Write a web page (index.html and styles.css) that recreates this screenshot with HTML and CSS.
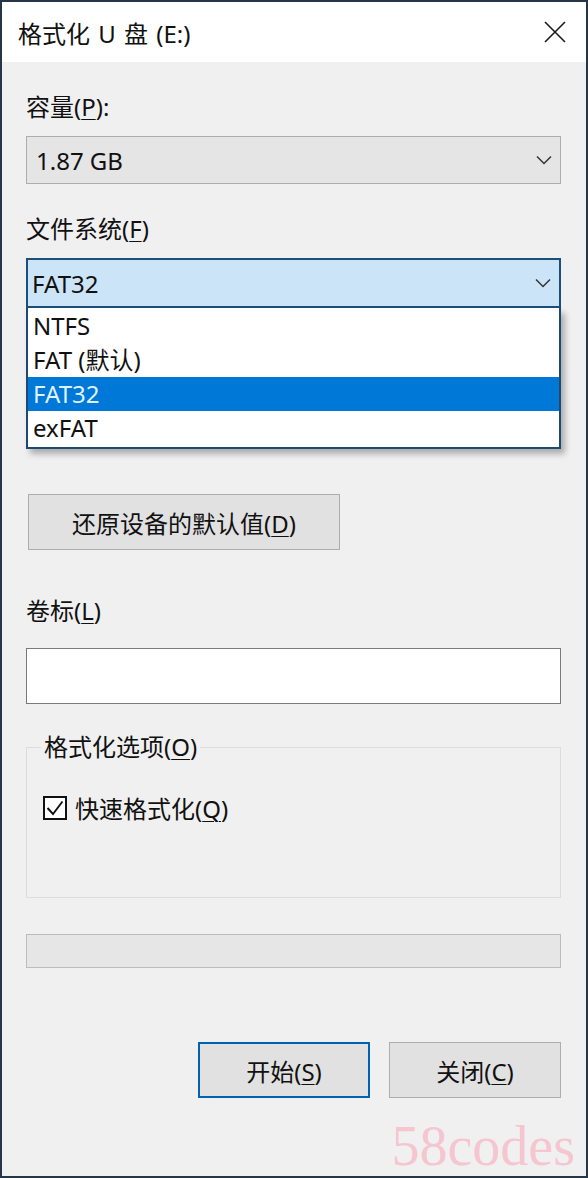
FILE: index.html
```html
<!DOCTYPE html>
<html lang="zh-CN">
<head>
<meta charset="utf-8">
<title>格式化 U 盘 (E:)</title>
<link rel="stylesheet" href="styles.css">
</head>
<body>
<div class="window">
  <div class="titlebar">
    <span class="title">格式化 U 盘 (E:)</span>
    <svg class="close" width="24" height="24" viewBox="0 0 24 24"><path d="M2 2 L22 22 M22 2 L2 22" stroke="#1a1a1a" stroke-width="1.6" fill="none"/></svg>
  </div>
  <div class="content">
    <div class="label l-cap">容量(<u>P</u>):</div>
    <div class="combo">
      <span class="combo-text">1.87 GB</span>
      <svg class="chev" width="16" height="10" viewBox="0 0 16 10"><path d="M1 1.5 L8 8.5 L15 1.5" stroke="#333" stroke-width="1.5" fill="none"/></svg>
    </div>
    <div class="label l-fs">文件系统(<u>F</u>)</div>
    <div class="combo-wrap">
      <div class="combo open">
        <span class="combo-text">FAT32</span>
        <svg class="chev" width="16" height="10" viewBox="0 0 16 10"><path d="M1 1.5 L8 8.5 L15 1.5" stroke="#333" stroke-width="1.5" fill="none"/></svg>
      </div>
      <ul class="dropdown">
        <li>NTFS</li>
        <li>FAT (默认)</li>
        <li class="sel">FAT32</li>
        <li>exFAT</li>
      </ul>
    </div>
    <button class="btn restore">还原设备的默认值(<u>D</u>)</button>
    <div class="label l-vol">卷标(<u>L</u>)</div>
    <div class="textbox"></div>
    <fieldset class="group">
      <legend>格式化选项(<u>O</u>)</legend>
      <label class="check">
        <span class="box"><svg width="20" height="20" viewBox="0 0 20 20"><path d="M2.5 10 L8 16 L17.5 3.5" stroke="#111" stroke-width="1.9" fill="none"/></svg></span>
        <span>快速格式化(<u>Q</u>)</span>
      </label>
    </fieldset>
    <div class="progress"></div>
    <div class="actions">
      <button class="btn action primary">开始(<u>S</u>)</button>
      <button class="btn action">关闭(<u>C</u>)</button>
    </div>
    <div class="watermark">58codes</div>
  </div>
</div>
</body>
</html>
```
FILE: styles.css
```css
* { box-sizing: border-box; }
html, body { margin: 0; padding: 0; }
body {
  width: 588px;
  height: 1178px;
  background: #f0f0f0;
  font-family: "Noto Sans", "Noto Sans CJK SC", sans-serif;
  font-size: 24px;
  color: #111;
  overflow: hidden;
}
u { text-decoration-thickness: 1px; text-underline-offset: 3px; }
.window {
  width: 588px;
  height: 1178px;
  border: 2px solid #263646;
  background: #f0f0f0;
  display: flex;
  flex-direction: column;
}
.titlebar {
  height: 60px;
  background: #ffffff;
  display: flex;
  align-items: center;
  justify-content: space-between;
  padding: 0 19px 0 16px;
  flex: none;
}
.title { font-size: 24px; color: #111; word-spacing: 2px; }
.close { display: block; }
.content {
  padding: 0 25px 0 24px;
  display: flex;
  flex-direction: column;
  flex: 1;
}
.label { height: 30px; line-height: 30px; }
.l-cap { margin-top: 30px; }
.l-fs { margin-top: 30px; }
.l-vol { margin-top: 46px; }
.combo {
  height: 48px;
  margin-top: 14px;
  background: #e5e5e5;
  border: 1px solid #adadad;
  display: flex;
  align-items: center;
  justify-content: space-between;
  padding: 0 8px 0 9px;
}
.combo-text { font-size: 24px; }
.combo-wrap { position: relative; margin-top: 14px; }
.combo.open {
  margin-top: 0;
  height: 50px;
  background: #cce4f7;
  border: 2px solid #1b4f7a;
  padding-left: 4px;
}
.dropdown {
  position: absolute;
  left: 0;
  right: 0;
  top: 50px;
  margin: 0;
  padding: 1px 0 2px;
  list-style: none;
  background: #fff;
  border: 2px solid #1e4a72;
  border-top: none;
  box-shadow: 4px 5px 6px rgba(0,0,0,0.28);
  z-index: 2;
}
.dropdown li {
  height: 34px;
  line-height: 34px;
  padding-left: 5px;
  font-size: 24px;
}
.dropdown li.sel { background: #0078d7; color: #dff2ff; }
.btn {
  font-family: inherit;
  font-size: 24px;
  color: #111;
  background: #e1e1e1;
  border: 1px solid #adadad;
  padding: 0;
  height: 56px;
}
.restore {
  margin-top: 186px;
  margin-left: 2px;
  width: 312px;
}
.textbox {
  margin-top: 22px;
  height: 56px;
  background: #fff;
  border: 1px solid #7a7a7a;
}
.group {
  margin: 30px 0 0;
  height: 164px;
  border: 1px solid #dcdcdc;
  padding: 0 14px;
}
.group legend {
  padding: 0 3px;
  line-height: 26px;
  margin-left: 0;
}
.check {
  display: flex;
  align-items: center;
  gap: 8px;
  margin-top: 30px;
  margin-left: 2px;
}
.box {
  width: 24px;
  height: 24px;
  border: 2px solid #111;
  background: #fff;
  display: flex;
  align-items: center;
  justify-content: center;
}
.box svg { display: block; }
.progress {
  margin-top: 36px;
  height: 34px;
  background: #e6e6e6;
  border: 1px solid #bcbcbc;
}
.actions {
  margin-top: 74px;
  display: flex;
  justify-content: flex-end;
  gap: 19px;
}
.action { width: 172px; }
.action.primary { border: 2px solid #0063b1; }
.watermark {
  margin-top: 20px;
  margin-right: -14px;
  text-align: right;
  font-family: "Liberation Serif", "DejaVu Serif", serif;
  font-size: 56px;
  line-height: 56px;
  color: #f5c6d0;
}
```
